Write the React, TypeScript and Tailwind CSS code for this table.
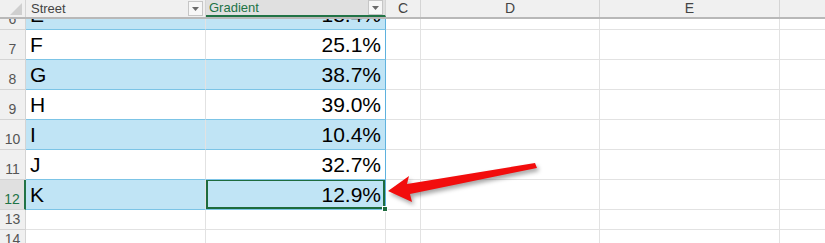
type Row = { n: number; street: string; gradient: string; h: number }

const rows: Row[] = [
  { n: 6, street: 'E', gradient: '18.4%', h: 11 },
  { n: 7, street: 'F', gradient: '25.1%', h: 30 },
  { n: 8, street: 'G', gradient: '38.7%', h: 30 },
  { n: 9, street: 'H', gradient: '39.0%', h: 30 },
  { n: 10, street: 'I', gradient: '10.4%', h: 30 },
  { n: 11, street: 'J', gradient: '32.7%', h: 30 },
  { n: 12, street: 'K', gradient: '12.9%', h: 30 },
]

function FilterButton() {
  return (
    <div className="flex h-[15px] w-[15px] items-center justify-center border border-[#c6c6c6] bg-[#f7f7f7]">
      <svg width="7" height="4" viewBox="0 0 7 4">
        <path d="M0 0h7L3.5 4z" fill="#6a6a6a" />
      </svg>
    </div>
  )
}

function ColHead({ label, w }: { label: string; w: string }) {
  return (
    <div
      className={`flex h-full shrink-0 items-center justify-center border-r border-[#d4d4d4] text-[14px] text-[#444] ${w}`}
    >
      {label}
    </div>
  )
}

function EmptyCells() {
  return (
    <>
      <div className="w-[35px] shrink-0 border-b border-r border-[#e2e2e2]" />
      <div className="w-[179px] shrink-0 border-b border-r border-[#e2e2e2]" />
      <div className="w-[180px] shrink-0 border-b border-r border-[#e2e2e2]" />
      <div className="flex-1 border-b border-[#e2e2e2]" />
    </>
  )
}

export default function App() {
  return (
    <div className="relative h-[243px] w-[825px] overflow-hidden bg-white font-['Liberation_Sans',Arial,sans-serif]">
      {/* column headers, with the table header row frozen in place */}
      <div className="flex h-[19px] border-b-2 border-[#b8b8b8] bg-[#f0f0f0]">
        <div className="relative h-full w-[26px] shrink-0 border-r border-[#d4d4d4]">
          <div className="absolute bottom-[2px] right-[3px] h-0 w-0 border-b-[12px] border-l-[12px] border-b-[#cfcfcf] border-l-transparent" />
        </div>
        <div className="flex h-full w-[180px] shrink-0 items-center justify-between border-r border-[#d4d4d4] pl-[5px] pr-[2px] text-[13px] text-[#444]">
          <span>Street</span>
          <FilterButton />
        </div>
        <div className="flex h-full w-[180px] shrink-0 items-center justify-between border-b-2 border-r border-[#d4d4d4] border-b-[#217346] bg-[#e0e0e0] pl-[3px] pr-[2px] text-[13px] text-[#217346]">
          <span>Gradient</span>
          <FilterButton />
        </div>
        <ColHead label="C" w="w-[35px]" />
        <ColHead label="D" w="w-[179px]" />
        <ColHead label="E" w="w-[180px]" />
        <div className="flex-1" />
      </div>

      {rows.map((r) => {
        const banded = r.n % 2 === 0
        const active = r.n === 12
        const fill = banded ? 'bg-[#c0e4f5]' : 'bg-white'
        return (
          <div key={r.n} className="flex overflow-hidden" style={{ height: r.h }}>
            <div
              className={`flex w-[26px] shrink-0 items-end justify-center border-b border-r border-[#d4d4d4] pb-[3px] text-[14px] leading-none ${
                active
                  ? 'border-r-2 border-r-[#217346] bg-[#e0e0e0] text-[#217346]'
                  : 'bg-[#f0f0f0] text-[#555]'
              }`}
            >
              {r.n}
            </div>
            <div
              className={`flex w-[180px] shrink-0 items-end border-b border-r border-b-[#7cc4e6] border-r-[#e2e2e2] pb-[4px] pl-[4px] text-[21px] leading-none text-black ${fill}`}
            >
              {r.street}
            </div>
            <div
              className={`relative flex w-[180px] shrink-0 items-end justify-end border-b border-r border-b-[#7cc4e6] border-r-[#5fb2de] pb-[4px] pr-[4px] text-[21px] leading-none text-black ${fill}`}
            >
              {r.gradient}
              {active && (
                <div className="pointer-events-none absolute inset-0 -top-px border-2 border-[#1e6b3d]" />
              )}
            </div>
            <EmptyCells />
          </div>
        )
      })}

      {[13, 14].map((n) => (
        <div key={n} className="flex h-[20px]">
          <div className="flex w-[26px] shrink-0 items-end justify-center border-b border-r border-[#d4d4d4] bg-[#f0f0f0] pb-[3px] text-[14px] leading-none text-[#555]">
            {n}
          </div>
          <div className="w-[180px] shrink-0 border-b border-r border-[#e2e2e2]" />
          <div className="w-[180px] shrink-0 border-b border-r border-[#e2e2e2]" />
          <EmptyCells />
        </div>
      ))}

      {/* fill handle on the active cell */}
      <div className="absolute left-[382px] top-[206px] h-[6px] w-[6px] border border-white bg-[#1e6b3d]" />

      {/* callout arrow */}
      <svg
        className="pointer-events-none absolute left-0 top-0 drop-shadow-[2px_3px_2px_rgba(0,0,0,0.35)]"
        width="825"
        height="243"
        viewBox="0 0 825 243"
      >
        <polygon
          points="388,191 409,176 407,184 535,163 537,168 410,194 412,202"
          fill="#f20d0d"
        />
      </svg>
    </div>
  )
}
